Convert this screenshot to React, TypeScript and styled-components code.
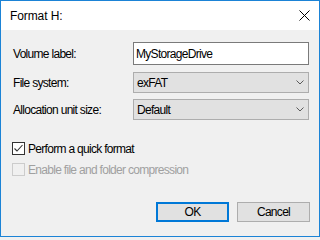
import React from "react";
import styled, { createGlobalStyle } from "styled-components";

const Global = createGlobalStyle`
  html, body { margin: 0; padding: 0; background: #f0f0f0; }
  * { box-sizing: border-box; }
`;

const FONT = `"Liberation Sans", Arial, sans-serif`;

const Window = styled.div`
  width: 320px;
  height: 237px;
  border: 1px solid #1b83d6;
  background: #f0f0f0;
  display: flex;
  flex-direction: column;
  font-family: ${FONT};
  font-size: 12px;
  letter-spacing: -0.7px;
  color: #000;
`;

const TitleBar = styled.div`
  height: 29px;
  flex: none;
  background: #ffffff;
  display: flex;
  align-items: center;
  justify-content: space-between;
  padding: 0 9px 0 9px;
`;

const Title = styled.span`
  font-size: 12px;
  letter-spacing: -0.1px;
  color: #000;
`;

const Content = styled.div`
  flex: 1;
  display: flex;
  flex-direction: column;
  padding: 12px 10px 14px 11px;
`;

const FieldRow = styled.div<{ $h: number; $mb: number }>`
  display: flex;
  align-items: center;
  justify-content: space-between;
  height: ${(p) => p.$h}px;
  margin-bottom: ${(p) => p.$mb}px;
`;

const Label = styled.span`
  white-space: nowrap;
  padding-left: 1px;
`;

const TextBox = styled.div`
  width: 176px;
  height: 100%;
  background: #ffffff;
  border: 1px solid #7a7a7a;
  display: flex;
  align-items: center;
  padding: 0 2px;
`;

const Select = styled.div`
  width: 176px;
  height: 100%;
  background: #e1e1e1;
  border: 1px solid #adadad;
  display: flex;
  align-items: center;
  justify-content: space-between;
  padding: 0 4px 0 3px;
`;

const Checks = styled.div`
  margin-top: 22px;
  display: flex;
  flex-direction: column;
  gap: 8px;
`;

const CheckRow = styled.div<{ $disabled?: boolean }>`
  display: flex;
  align-items: center;
  height: 13px;
  gap: 3px;
  color: ${(p) => (p.$disabled ? "#a0a0a0" : "#000")};
  white-space: nowrap;
`;

const Box = styled.div<{ $disabled?: boolean }>`
  width: 13px;
  height: 13px;
  flex: none;
  border: 1px solid ${(p) => (p.$disabled ? "#cccccc" : "#333333")};
  background: ${(p) => (p.$disabled ? "#f0f0f0" : "#ffffff")};
  display: flex;
  align-items: center;
  justify-content: center;
`;

const ButtonBar = styled.div`
  margin-top: auto;
  display: flex;
  justify-content: flex-end;
  gap: 8px;
  margin-right: -1px;
`;

const Button = styled.div<{ $default?: boolean }>`
  width: 73px;
  height: 20px;
  background: #e1e1e1;
  border: ${(p) => (p.$default ? "2px solid #0078d7" : "1px solid #adadad")};
  display: flex;
  align-items: center;
  justify-content: center;
`;

const Chevron = () => (
  <svg width="8" height="5" viewBox="0 0 8 5">
    <path d="M0.5 0.5 L4 4 L7.5 0.5" fill="none" stroke="#5a5a5a" strokeWidth="1" />
  </svg>
);

const CloseIcon = () => (
  <svg width="11" height="11" viewBox="0 0 11 11">
    <path d="M0.5 0.5 L10.5 10.5 M10.5 0.5 L0.5 10.5" fill="none" stroke="#000" strokeWidth="1" />
  </svg>
);

const Check = () => (
  <svg width="11" height="11" viewBox="0 0 11 11">
    <path d="M1.5 5.5 L4 8 L9.5 2" fill="none" stroke="#333" strokeWidth="1.1" />
  </svg>
);

export default function App() {
  return (
    <>
      <Global />
      <Window>
        <TitleBar>
          <Title>Format H:</Title>
          <CloseIcon />
        </TitleBar>
        <Content>
          <FieldRow $h={23} $mb={7}>
            <Label>Volume label:</Label>
            <TextBox>MyStorageDrive</TextBox>
          </FieldRow>
          <FieldRow $h={21} $mb={6}>
            <Label>File system:</Label>
            <Select>
              <span>exFAT</span>
              <Chevron />
            </Select>
          </FieldRow>
          <FieldRow $h={21} $mb={0}>
            <Label>Allocation unit size:</Label>
            <Select>
              <span>Default</span>
              <Chevron />
            </Select>
          </FieldRow>
          <Checks>
            <CheckRow>
              <Box>
                <Check />
              </Box>
              <span>Perform a quick format</span>
            </CheckRow>
            <CheckRow $disabled>
              <Box $disabled />
              <span>Enable file and folder compression</span>
            </CheckRow>
          </Checks>
          <ButtonBar>
            <Button $default>OK</Button>
            <Button>Cancel</Button>
          </ButtonBar>
        </Content>
      </Window>
    </>
  );
}
